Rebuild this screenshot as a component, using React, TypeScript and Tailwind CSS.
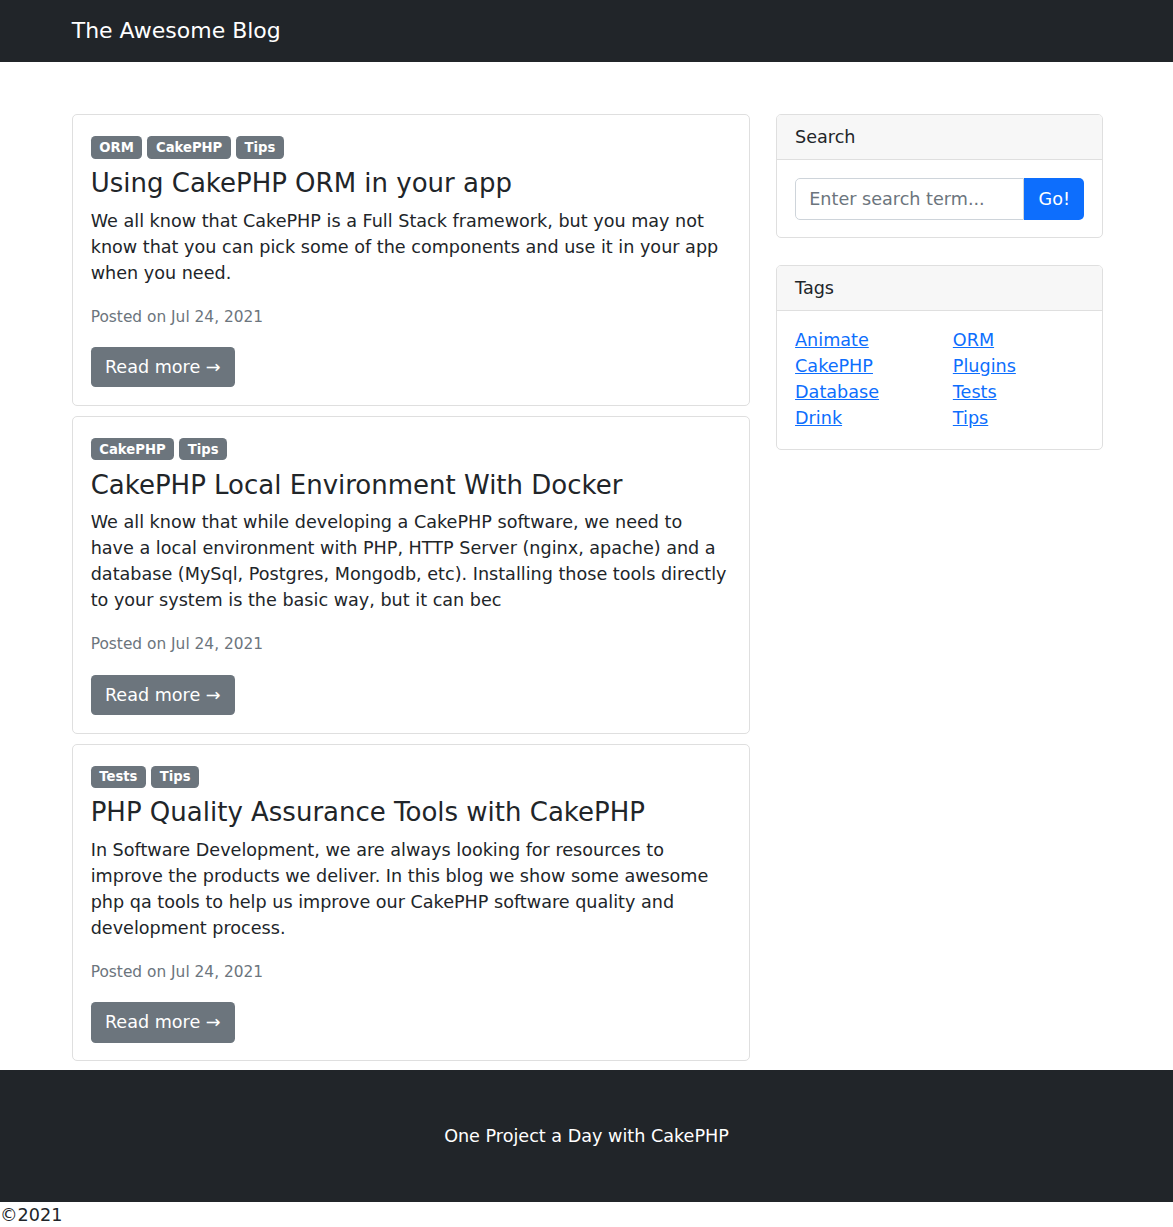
const posts = [
  {
    tags: ["ORM", "CakePHP", "Tips"],
    title: "Using CakePHP ORM in your app",
    body: "We all know that CakePHP is a Full Stack framework, but you may not know that you can pick some of the components and use it in your app when you need.",
  },
  {
    tags: ["CakePHP", "Tips"],
    title: "CakePHP Local Environment With Docker",
    body: "We all know that while developing a CakePHP software, we need to have a local environment with PHP, HTTP Server (nginx, apache) and a database (MySql, Postgres, Mongodb, etc). Installing those tools directly to your system is the basic way, but it can bec",
  },
  {
    tags: ["Tests", "Tips"],
    title: "PHP Quality Assurance Tools with CakePHP",
    body: "In Software Development, we are always looking for resources to improve the products we deliver. In this blog we show some awesome php qa tools to help us improve our CakePHP software quality and development process.",
  },
];

const tagsLeft = ["Animate", "CakePHP", "Database", "Drink"];
const tagsRight = ["ORM", "Plugins", "Tests", "Tips"];

const App = () => {
  return (
    <div className="font-['DejaVu_Sans',sans-serif] text-[17.6px] leading-[26.4px] text-[#212529] bg-white">
      {/* Navbar */}
      <nav className="bg-[#212529] h-[62px] flex items-center pb-[2px]">
        <div className="w-[1056px] mx-auto px-[13.2px]">
          <a href="#" className="text-white text-[22px] leading-[33px]">The Awesome Blog</a>
        </div>
      </nav>

      {/* Content */}
      <div className="w-[1056px] mx-auto px-[13.2px] mt-[52.4px]">
        <div className="grid grid-cols-[678.4px_minmax(0,1fr)] gap-x-[26.4px] items-start -mr-[1.5px]">
          <div>
            {posts.map((post, i) => (
              <div
                key={i}
                className="flex flex-col items-start border border-[#dfdfdf] rounded-[5px] px-[18px] pt-[17.6px] pb-[17.6px] mb-[10px] last:mb-[8.8px]"
              >
                <div className="flex gap-[5px] pt-[3.4px]">
                  {post.tags.map((t) => (
                    <span key={t} className="bg-[#6c757d] text-white text-[13.2px] leading-[13.2px] font-bold px-[8.6px] py-[4.6px] rounded-[4.5px]">
                      {t}
                    </span>
                  ))}
                </div>
                <h2 className="text-[26px] leading-[31.7px] mt-[9.3px] mb-[8px]">{post.title}</h2>
                <p className="leading-[26px] mb-[20px] pr-[3px]">{post.body}</p>
                <div className="text-[15.4px] leading-[23.1px] text-[#6c757d] mb-[18.2px]">Posted on Jul 24, 2021</div>
                <a href="#" className="bg-[#6c757d] text-white rounded-[4.5px] px-[14.2px] py-[7px] leading-[26.4px]">
                  Read more →
                </a>
              </div>
            ))}
          </div>

          {/* Sidebar */}
          <div>
            <div className="border border-[#dfdfdf] rounded-[5px] mb-[26.4px] overflow-hidden">
              <div className="bg-[#f7f7f7] border-b border-[#dfdfdf] px-[17.6px] py-[8.8px]">Search</div>
              <div className="p-[17.6px] flex">
                <input
                  className="flex-1 min-w-0 border border-[#ced4da] rounded-l-[5px] px-[13.2px] py-[6.6px] leading-[26.4px] outline-none placeholder:text-[#6c757d]"
                  placeholder="Enter search term..."
                />
                <button className="bg-[#0d6efd] text-white rounded-r-[5px] px-[14.2px] py-[7.6px] leading-[26.4px]">Go!</button>
              </div>
            </div>

            <div className="border border-[#dfdfdf] rounded-[5px] overflow-hidden">
              <div className="bg-[#f7f7f7] border-b border-[#dfdfdf] px-[17.6px] pt-[9.4px] pb-[8.2px]">Tags</div>
              <div className="px-[17.6px] pt-[16px] pb-[18px] grid grid-cols-2 gap-x-[26.4px] leading-[26px]">
                <ul>
                  {tagsLeft.map((t) => (
                    <li key={t}><a href="#" className="text-[#0d6efd] underline">{t}</a></li>
                  ))}
                </ul>
                <ul>
                  {tagsRight.map((t) => (
                    <li key={t}><a href="#" className="text-[#0d6efd] underline">{t}</a></li>
                  ))}
                </ul>
              </div>
            </div>
          </div>
        </div>
      </div>

      {/* Footer */}
      <footer className="bg-[#212529] pt-[53px] pb-[52.6px]">
        <p className="text-center text-white">One Project a Day with CakePHP</p>
      </footer>
      <div>©2021</div>
    </div>
  );
};

export default App;
